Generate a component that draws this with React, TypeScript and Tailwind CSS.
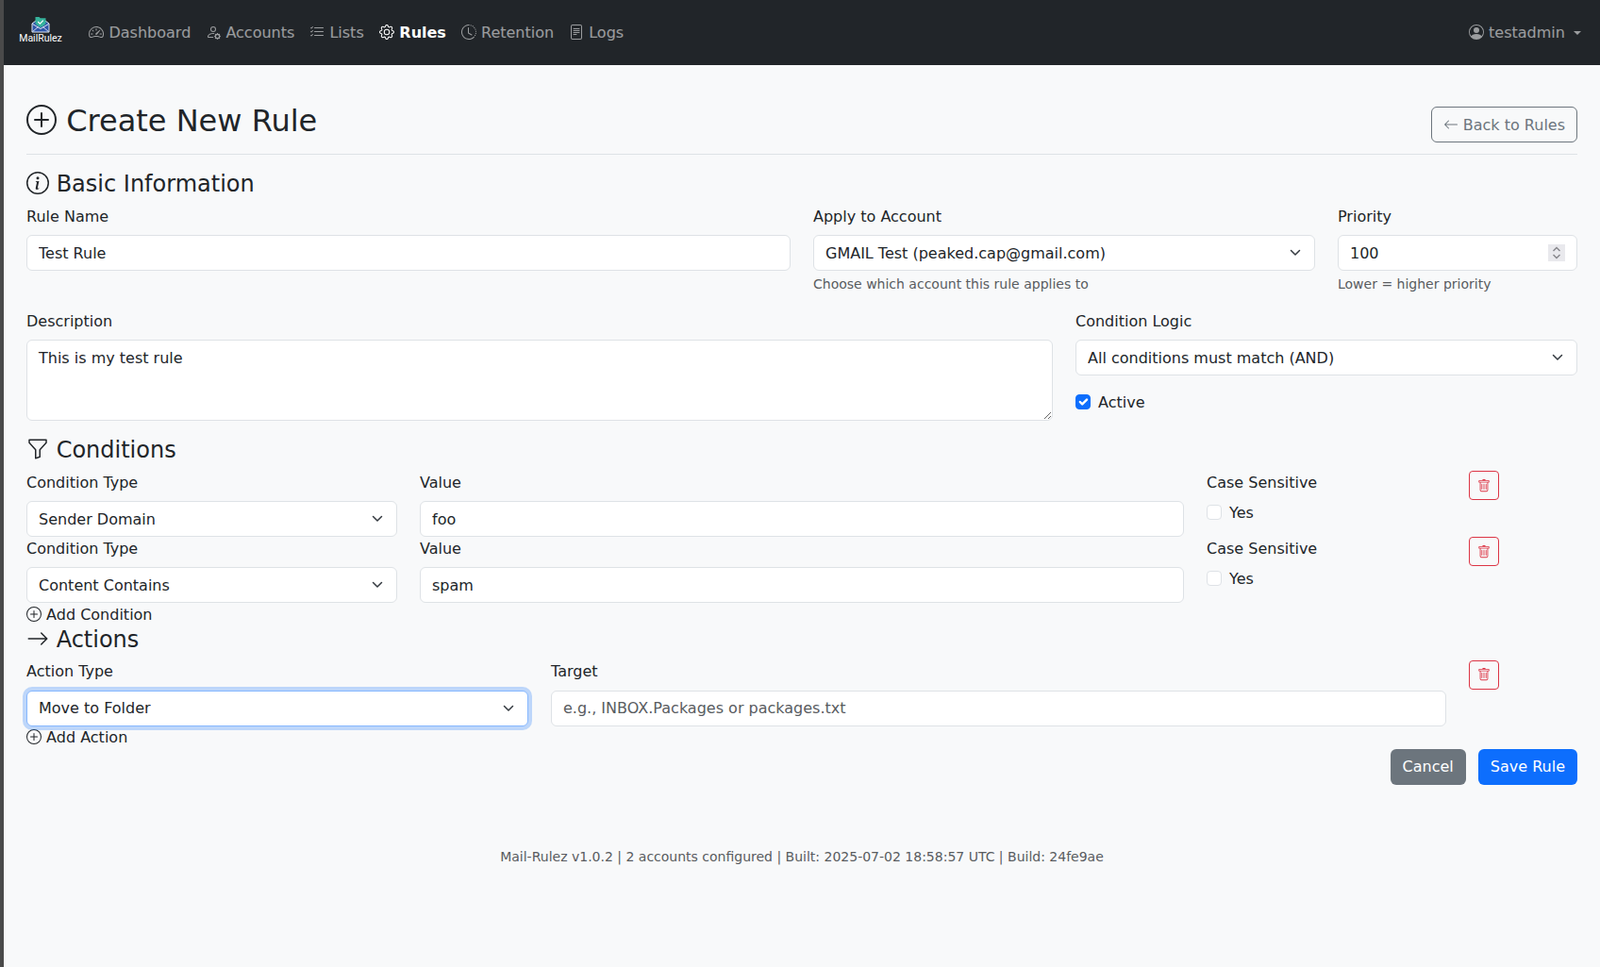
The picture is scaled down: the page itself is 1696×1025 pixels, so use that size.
import {
  BsArrowLeft,
  BsArrowRight,
  BsClockHistory,
  BsFileText,
  BsFunnel,
  BsGear,
  BsInfoCircle,
  BsListCheck,
  BsPersonCircle,
  BsPersonGear,
  BsPlusCircle,
  BsSpeedometer2,
  BsTrash,
} from 'react-icons/bs';
import type { IconType } from 'react-icons';

const navItems: { label: string; icon: IconType; active?: boolean }[] = [
  { label: 'Dashboard', icon: BsSpeedometer2 },
  { label: 'Accounts', icon: BsPersonGear },
  { label: 'Lists', icon: BsListCheck },
  { label: 'Rules', icon: BsGear, active: true },
  { label: 'Retention', icon: BsClockHistory },
  { label: 'Logs', icon: BsFileText },
];

const inputClass =
  'block w-full h-[38px] rounded-md border border-[#dee2e6] bg-white px-3 text-base text-[#212529] outline-none placeholder:text-[#595c5f]';

function Logo() {
  return (
    <div className="flex flex-col items-center w-11 mb-[6px]">
      <svg width="20" height="18" viewBox="0 0 20 18">
        <path d="M1 8 L5 5 H15 L19 8 V17 H1 Z" fill="#2f55a8" stroke="#dfe7f2" strokeWidth="1" />
        <path d="M1.5 8.5 L10 13.5 L18.5 8.5" fill="none" stroke="#dfe7f2" strokeWidth="1" />
        <path d="M1.5 16.5 L7.5 11.5 M18.5 16.5 L12.5 11.5" fill="none" stroke="#dfe7f2" strokeWidth="0.9" />
        <path d="M4.5 1 H8.5 L9.8 2.2 H15.5 V8 C14 10 12 11.2 10 12 C8 11.2 6 10 4.5 8 Z" fill="#36b39c" />
        <path d="M7.2 6 L9.4 8.2 L12.8 4.6" fill="none" stroke="#ffffff" strokeWidth="1.1" />
      </svg>
      <span className="font-['Roboto',sans-serif] text-[10.5px] leading-[12px] text-white">MailRulez</span>
    </div>
  );
}

function Navbar() {
  return (
    <nav className="flex items-center h-[69px] bg-[#212529] pl-[17px] pr-3">
      <Logo />
      <ul className="flex ml-[21.4px]">
        {navItems.map(({ label, icon: Icon, active }) => (
          <li key={label}>
            <a
              href="#"
              className={`block p-2 leading-6 whitespace-pre ${active ? 'font-bold text-white' : 'text-white/55'}`}
            >
              <Icon className="inline-block align-[-0.125em]" /> {label}
            </a>
          </li>
        ))}
      </ul>
      <a href="#" className="ml-auto block p-2 leading-6 text-white/55 whitespace-pre">
        <BsPersonCircle className="inline-block align-[-0.125em]" /> testadmin{' '}
        <span className="inline-block ml-[4px] align-[3px] w-0 h-0 border-t-[4.8px] border-x-[4.8px] border-t-white/55 border-x-transparent" />
      </a>
    </nav>
  );
}

function Field({
  label,
  children,
  className,
  plain,
}: {
  label: string;
  children: React.ReactNode;
  className: string;
  plain?: boolean;
}) {
  return (
    <div className={className}>
      <label className={plain ? 'block mb-2 leading-6' : 'block mb-[7px] leading-[25px]'}>{label}</label>
      {children}
    </div>
  );
}

function Select({ options, focused }: { options: string[]; focused?: boolean }) {
  return (
    <div className="relative">
      <select
        className={`block w-full h-[38px] appearance-none rounded-md border bg-white pl-3 pr-9 leading-6 text-base text-[#212529] outline-none ${
          focused
            ? 'py-[6px] border-[#86b7fe] shadow-[0_0_0_4px_rgba(13,110,253,0.25)]'
            : 'pt-[7px] pb-[5px] border-[#dee2e6]'
        }`}
        defaultValue={options[0]}
      >
        {options.map((o) => (
          <option key={o}>{o}</option>
        ))}
      </select>
      <svg
        viewBox="0 0 16 16"
        className="absolute right-[13px] top-[11px] w-4 h-4 pointer-events-none"
        fill="none"
        stroke="#343a40"
        strokeWidth="1.5"
        strokeLinecap="round"
        strokeLinejoin="round"
      >
        <path d="m3.5 5.5 4.5 4.5 4.5-4.5" />
      </svg>
    </div>
  );
}

function Check({ label, checked }: { label: string; checked?: boolean }) {
  return (
    <label className="flex items-start h-6 gap-2">
      <span className="relative w-4 h-4 mt-1">
        <input
          type="checkbox"
          defaultChecked={checked}
          className="block appearance-none w-4 h-4 rounded border border-[#dee2e6] bg-white checked:bg-[#0d6efd] checked:border-[#0d6efd]"
        />
        {checked && (
          <svg
            viewBox="0 0 20 20"
            className="absolute inset-0 w-4 h-4 pointer-events-none"
            fill="none"
            stroke="#fff"
            strokeWidth="3"
            strokeLinecap="round"
            strokeLinejoin="round"
          >
            <path d="m6 10 3 3 6-6" />
          </svg>
        )}
      </span>
      <span className="leading-[26px]">{label}</span>
    </label>
  );
}

function TrashButton() {
  return (
    <button
      type="button"
      className="flex items-center justify-center w-8 h-[31px] rounded border border-[#dc3545] text-[14px] text-[#dc3545]"
    >
      <BsTrash />
    </button>
  );
}

function ConditionRow({ type, value }: { type: string; value: string }) {
  return (
    <div className="grid grid-cols-12 gap-x-6">
      <Field label="Condition Type" className="col-span-3">
        <Select options={[type]} />
      </Field>
      <Field label="Value" className="col-span-6">
        <input className={inputClass} defaultValue={value} />
      </Field>
      <Field label="Case Sensitive" className="col-span-2">
        <Check label="Yes" />
      </Field>
      <div className="col-span-1">
        <TrashButton />
      </div>
    </div>
  );
}

function SectionTitle({ icon: Icon, children }: { icon: IconType; children: React.ReactNode }) {
  return (
    <h4 className="text-2xl leading-[30.8px] font-medium mb-[6px] whitespace-pre">
      <Icon className="inline-block align-[-0.125em]" /> {children}
    </h4>
  );
}

function AddLink({ children, className }: { children: React.ReactNode; className: string }) {
  return (
    <a href="#" className={`block h-6 whitespace-pre text-[#212529] ${className}`}>
      <BsPlusCircle className="inline-block align-[-0.125em]" /> {children}
    </a>
  );
}

export default function App() {
  return (
    <div className="flex min-h-screen bg-[#f8f9fa] text-[#212529] text-base font-['DejaVu_Sans',sans-serif]">
      <div className="w-1 bg-[#4a4a4a]" />
      <div className="flex-1 min-w-0">
        <Navbar />
        <main className="px-6 pt-6">
          {/* Page header */}
          <div className="flex items-center justify-between pt-4 pb-2 mb-4 border-b border-[#dee2e6]">
            <h2 className="text-[32px] leading-[38.4px] font-medium mb-2 whitespace-pre">
              <BsPlusCircle className="inline-block align-[-0.125em]" /> Create New Rule
            </h2>
            <a
              href="#"
              className="block px-3 pt-[6.6px] pb-[5.4px] leading-6 rounded-md border border-[#6c757d] text-[#6c757d] whitespace-pre"
            >
              <BsArrowLeft className="inline-block align-[-0.125em]" /> Back to Rules
            </a>
          </div>

          {/* Basic information */}
          <SectionTitle icon={BsInfoCircle}>Basic Information</SectionTitle>
          <div className="grid grid-cols-12 gap-x-6">
            <Field label="Rule Name" className="col-span-6 mb-4">
              <input className={inputClass} defaultValue="Test Rule" />
            </Field>
            <Field label="Apply to Account" className="col-span-4 mb-4">
              <Select options={['GMAIL Test (peaked.cap@gmail.com)']} />
              <p className="mt-1 text-[14px] leading-[21px] text-[#595c5f]">Choose which account this rule applies to</p>
            </Field>
            <Field label="Priority" className="col-span-2 mb-4">
              <div className="relative">
                <input
                  type="number"
                  className={`${inputClass} [&::-webkit-inner-spin-button]:appearance-none`}
                  defaultValue={100}
                />
                {/* spinner drawn over the input, the browser's own one differs */}
                <svg
                  viewBox="0 0 18 18"
                  className="absolute right-[13px] top-[10px] w-[18px] h-[18px] bg-[#e9e9ed] pointer-events-none"
                  fill="none"
                  stroke="#85858a"
                  strokeWidth="1.4"
                >
                  <path d="M5.5 7 L9 3.5 L12.5 7 M5.5 11 L9 14.5 L12.5 11" />
                </svg>
              </div>
              <p className="mt-1 text-[14px] leading-[21px] text-[#595c5f]">Lower = higher priority</p>
            </Field>
            <Field label="Description" className="col-span-8 mb-4">
              <textarea
                rows={3}
                className="block w-full h-[86px] rounded-md border border-[#dee2e6] bg-white px-3 pt-[7px] pb-[5px] leading-6 outline-none"
                defaultValue="This is my test rule"
              />
            </Field>
            <Field label="Condition Logic" className="col-span-4 mb-4">
              <Select options={['All conditions must match (AND)']} />
              <div className="mt-4">
                <Check label="Active" checked />
              </div>
            </Field>
          </div>

          {/* Conditions */}
          <SectionTitle icon={BsFunnel}>Conditions</SectionTitle>
          <ConditionRow type="Sender Domain" value="foo" />
          <ConditionRow type="Content Contains" value="spam" />
          <AddLink className="leading-[26px]">Add Condition</AddLink>

          {/* Actions */}
          <SectionTitle icon={BsArrowRight}>Actions</SectionTitle>
          <div className="grid grid-cols-12 gap-x-6">
            <Field label="Action Type" className="col-span-4" plain>
              <Select options={['Move to Folder']} focused />
            </Field>
            <Field label="Target" className="col-span-7" plain>
              <input className={inputClass} placeholder="e.g., INBOX.Packages or packages.txt" />
            </Field>
            <div className="col-span-1">
              <TrashButton />
            </div>
          </div>
          <AddLink className="leading-6">Add Action</AddLink>

          <div className="flex justify-end gap-[13px]">
            <button type="button" className="h-[38px] px-[13px] rounded-md bg-[#6c757d] text-white">
              Cancel
            </button>
            <button type="button" className="h-[38px] px-[13px] rounded-md bg-[#0d6efd] text-white">
              Save Rule
            </button>
          </div>
        </main>
        <footer className="pt-[66px] text-center text-[14px] leading-[21px] text-[#595c5f]">
          Mail-Rulez v1.0.2 | 2 accounts configured | Built: 2025-07-02 18:58:57 UTC | Build: 24fe9ae
        </footer>
      </div>
    </div>
  );
}
